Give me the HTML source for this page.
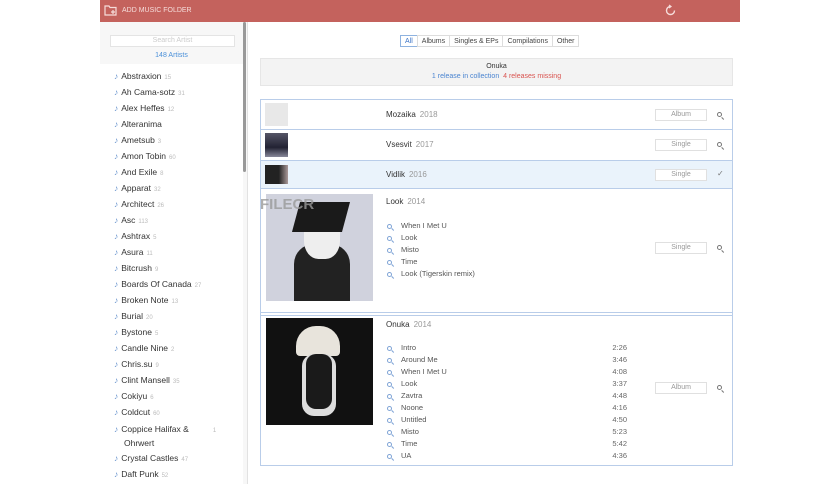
<!DOCTYPE html>
<html><head><meta charset="utf-8"><style>
*{margin:0;padding:0;box-sizing:border-box}
body{width:836px;height:484px;background:#fff;font-family:"Liberation Sans",sans-serif;position:relative;overflow:hidden;color:#333}
.hdr{position:absolute;left:100px;top:0;width:640px;height:22px;background:#c4625d;color:#f6dcda;font-size:7px}
.side{position:absolute;left:100px;top:22px;width:147px;height:462px;background:#f7f7f7}
.sb{position:absolute;left:243px;top:22px;width:3px;height:150px;background:#999;border-radius:2px}
.sdiv{position:absolute;left:247px;top:22px;width:1px;height:462px;background:#e2e2e2}
.search{position:absolute;left:110px;top:35px;width:125px;height:12px;background:#fff;border:1px solid #e4e4e4;font-size:7px;color:#ccc;text-align:center;line-height:10px}
.cnt{position:absolute;left:100px;top:52px;width:143px;text-align:center;font-size:7px;color:#4a90d9}
.listbg{position:absolute;left:100px;top:64px;width:143px;height:420px;background:#fff}
.it{position:absolute;left:114px;font-size:8.5px;color:#333;white-space:nowrap}
.it i{font-style:normal;color:#6f98d0;margin-right:3px}
.it b{font-weight:normal;color:#bbb;font-size:6px;margin-left:3px}
.tabs{position:absolute;left:401px;top:35px;display:flex;font-size:7px}
.tabs span{border:1px solid #ddd;padding:2px 4px;margin-left:-1px;color:#444;height:12px;line-height:8px}
.tabs span.a{border-color:#8fb3e0;color:#3a73c6}
.info{position:absolute;left:260px;top:58px;width:473px;height:28px;background:#f3f3f3;border:1px solid #e6e6e6;text-align:center;font-size:7px}
.panel{position:absolute;left:260px;top:99px;width:473px;height:367px;border:1px solid #b9cde9}
.row{position:absolute;left:0;width:471px;border-bottom:1px solid #b9cde9}
.t{position:absolute;left:125px;font-size:8px;color:#333}
.t span{color:#999;margin-left:4px}
.btn{position:absolute;left:394px;width:52px;height:12px;border:1px solid #e0e0e0;font-size:7px;color:#999;text-align:center;line-height:10px}
.q{display:inline-block;position:relative;width:5px;height:5px;border:1.2px solid currentColor;border-radius:50%}
.q::after{content:"";position:absolute;left:3.5px;top:3.5px;width:3px;height:1.2px;background:currentColor;transform:rotate(45deg);transform-origin:0 0}
.mg{position:absolute;left:456px;color:#777}
.tr{position:absolute;left:126px;font-size:7.5px;color:#555;width:240px}
.tr .q{color:#7fa4d6;margin-right:9px;vertical-align:-0.5px}
.tr b{position:absolute;right:0;font-weight:normal;color:#666}
</style></head><body>
<div class="hdr">
<svg style="position:absolute;left:4px;top:5px" width="13" height="11" viewBox="0 0 13 11"><path d="M1 1h4l1 1.5h6V10H1z" fill="none" stroke="#f6dcda" stroke-width="1.2"/><path d="M9 5v4M7 7h4" stroke="#f6dcda" stroke-width="1.2"/></svg>
<span style="position:absolute;left:22px;top:7px">ADD MUSIC FOLDER</span>
<svg style="position:absolute;left:564px;top:4px" width="13" height="13" viewBox="0 0 13 13"><path d="M6.5 2.5A4 4 0 1 0 10.5 6.5" fill="none" stroke="#f6dcda" stroke-width="1.4"/><path d="M5 1l2 1.5L5 4" fill="none" stroke="#f6dcda" stroke-width="1.2"/></svg>
</div>
<div class="side"></div>
<div class="listbg"></div>
<div class="search">Search Artist</div>
<div class="cnt">148 Artists</div>
<div class="sdiv"></div>
<div class="sb"></div>
<div class="it" style="top:71px"><i>♪</i>Abstraxion<b>15</b></div>
<div class="it" style="top:87px"><i>♪</i>Ah Cama-sotz<b>31</b></div>
<div class="it" style="top:103px"><i>♪</i>Alex Heffes<b>12</b></div>
<div class="it" style="top:119px"><i>♪</i>Alteranima</div>
<div class="it" style="top:135px"><i>♪</i>Ametsub<b>3</b></div>
<div class="it" style="top:151px"><i>♪</i>Amon Tobin<b>60</b></div>
<div class="it" style="top:167px"><i>♪</i>And Exile<b>8</b></div>
<div class="it" style="top:183px"><i>♪</i>Apparat<b>32</b></div>
<div class="it" style="top:199px"><i>♪</i>Architect<b>26</b></div>
<div class="it" style="top:215px"><i>♪</i>Asc<b>113</b></div>
<div class="it" style="top:231px"><i>♪</i>Ashtrax<b>5</b></div>
<div class="it" style="top:247px"><i>♪</i>Asura<b>11</b></div>
<div class="it" style="top:263px"><i>♪</i>Bitcrush<b>9</b></div>
<div class="it" style="top:279px"><i>♪</i>Boards Of Canada<b>27</b></div>
<div class="it" style="top:295px"><i>♪</i>Broken Note<b>13</b></div>
<div class="it" style="top:311px"><i>♪</i>Burial<b>20</b></div>
<div class="it" style="top:327px"><i>♪</i>Bystone<b>5</b></div>
<div class="it" style="top:343px"><i>♪</i>Candle Nine<b>2</b></div>
<div class="it" style="top:359px"><i>♪</i>Chris.su<b>9</b></div>
<div class="it" style="top:375px"><i>♪</i>Clint Mansell<b>35</b></div>
<div class="it" style="top:391px"><i>♪</i>Cokiyu<b>6</b></div>
<div class="it" style="top:407px"><i>♪</i>Coldcut<b>60</b></div>
<div class="it" style="top:424px"><i>♪</i>Coppice Halifax &amp;<b style="margin-left:24px">1</b></div>
<div class="it" style="top:438px;left:124px">Ohrwert</div>
<div class="it" style="top:453px"><i>♪</i>Crystal Castles<b>47</b></div>
<div class="it" style="top:469px"><i>♪</i>Daft Punk<b>52</b></div>

<div class="tabs"><span class="a">All</span><span>Albums</span><span>Singles &amp; EPs</span><span>Compilations</span><span>Other</span></div>
<div class="info"><div style="margin-top:4px;color:#333">Onuka</div><div style="margin-top:3px"><span style="color:#4a84d0">1 release in collection</span> &nbsp;<span style="color:#d9534f">4 releases missing</span></div></div>

<div class="panel">
<div class="row" style="top:0;height:30px"><div style="position:absolute;left:4px;top:3px;width:23px;height:23px;background:#e8e8e8"></div><div class="t" style="top:10px">Mozaika<span>2018</span></div><div class="btn" style="top:9px">Album</div><span class="mg q" style="top:12px"></span></div>
<div class="row" style="top:30px;height:31px"><div style="position:absolute;left:4px;top:3px;width:23px;height:24px;background:linear-gradient(#556,#223 60%,#889)"></div><div class="t" style="top:10px">Vsesvit<span>2017</span></div><div class="btn" style="top:9px">Single</div><span class="mg q" style="top:12px"></span></div>
<div class="row" style="top:61px;height:28px;background:#eaf3fb"><div style="position:absolute;left:4px;top:4px;width:23px;height:19px;background:linear-gradient(90deg,#222 60%,#a99)"></div><div class="t" style="top:9px">Vidlik<span>2016</span></div><div class="btn" style="top:8px;background:#fff">Single</div><div class="mg" style="top:8px;font-size:8px">✓</div></div>
<div class="row" style="top:89px;height:124px">
<div style="position:absolute;left:5px;top:5px;width:107px;height:107px;background:#d0d2dd;overflow:hidden"><div style="position:absolute;left:28px;top:50px;width:56px;height:57px;background:#222;border-radius:20px 20px 0 0"></div><div style="position:absolute;left:38px;top:20px;width:36px;height:45px;background:#eee;border-radius:40%"></div><div style="position:absolute;left:30px;top:8px;width:50px;height:30px;background:#1a1a1a;transform:skew(-15deg)"></div></div>
<div class="t" style="top:8px">Look<span>2014</span></div>
<div class="tr" style="top:32px"><span class="q"></span>When I Met U</div>
<div class="tr" style="top:44px"><span class="q"></span>Look</div>
<div class="tr" style="top:56px"><span class="q"></span>Misto</div>
<div class="tr" style="top:68px"><span class="q"></span>Time</div>
<div class="tr" style="top:80px"><span class="q"></span>Look (Tigerskin remix)</div>
<div class="btn" style="top:53px">Single</div><span class="mg q" style="top:56px"></span></div>
<div class="row" style="top:215px;height:151px;border-top:1px solid #b9cde9;border-bottom:none">
<div style="position:absolute;left:5px;top:2px;width:107px;height:107px;background:#111;overflow:hidden"><div style="position:absolute;left:30px;top:8px;width:44px;height:30px;background:#e8e4dc;border-radius:20px 20px 4px 4px"></div><div style="position:absolute;left:36px;top:36px;width:34px;height:62px;background:#ddd;border-radius:12px"></div><div style="position:absolute;left:40px;top:36px;width:26px;height:55px;background:#1a1a1a;border-radius:10px"></div></div>
<div class="t" style="top:4px">Onuka<span>2014</span></div>
<div class="tr" style="top:27px"><span class="q"></span>Intro<b>2:26</b></div>
<div class="tr" style="top:39px"><span class="q"></span>Around Me<b>3:46</b></div>
<div class="tr" style="top:51px"><span class="q"></span>When I Met U<b>4:08</b></div>
<div class="tr" style="top:63px"><span class="q"></span>Look<b>3:37</b></div>
<div class="tr" style="top:75px"><span class="q"></span>Zavtra<b>4:48</b></div>
<div class="tr" style="top:87px"><span class="q"></span>Noone<b>4:16</b></div>
<div class="tr" style="top:99px"><span class="q"></span>Untitled<b>4:50</b></div>
<div class="tr" style="top:111px"><span class="q"></span>Misto<b>5:23</b></div>
<div class="tr" style="top:123px"><span class="q"></span>Time<b>5:42</b></div>
<div class="tr" style="top:135px"><span class="q"></span>UA<b>4:36</b></div>
<div class="btn" style="top:66px">Album</div><span class="mg q" style="top:69px"></span></div>
</div>
<div style="position:absolute;left:260px;top:196px;font-size:15px;font-weight:bold;color:#9a9a9a;opacity:.8">FILECR</div>
</body></html>
